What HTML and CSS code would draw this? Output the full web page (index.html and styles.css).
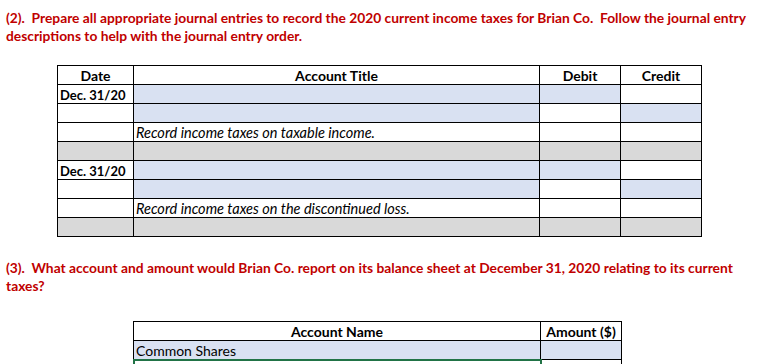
FILE: index.html
```html
<!DOCTYPE html>
<html>
<head>
<meta charset="utf-8">
<link rel="stylesheet" href="styles.css">
</head>
<body>
<p class="question q2">(2).&nbsp; Prepare all appropriate journal entries to record the 2020 current income taxes for Brian Co.&nbsp; Follow the journal entry<br>descriptions to help with the journal entry order.</p>

<table class="sheet journal">
  <colgroup>
    <col class="c-date"><col class="c-title"><col class="c-amt"><col class="c-amt">
  </colgroup>
  <tr class="head"><th>Date</th><th>Account Title</th><th>Debit</th><th>Credit</th></tr>
  <tr><td class="date">Dec. 31/20</td><td class="blue"></td><td class="blue"></td><td></td></tr>
  <tr><td></td><td class="blue"></td><td></td><td class="blue"></td></tr>
  <tr><td></td><td class="note">Record income taxes on taxable income.</td><td></td><td></td></tr>
  <tr class="gray"><td></td><td></td><td></td><td></td></tr>
  <tr><td class="date">Dec. 31/20</td><td class="blue"></td><td class="blue"></td><td></td></tr>
  <tr><td></td><td class="blue"></td><td></td><td class="blue"></td></tr>
  <tr><td></td><td class="note">Record income taxes on the discontinued loss.</td><td></td><td></td></tr>
  <tr class="gray"><td></td><td></td><td></td><td></td></tr>
</table>

<p class="question q3">(3).&nbsp; What account and amount would Brian Co. report on its balance sheet at December 31, 2020 relating to its current<br>taxes?</p>

<table class="sheet balance">
  <colgroup>
    <col class="c-name"><col class="c-amt">
  </colgroup>
  <tr class="head"><th>Account Name</th><th>Amount ($)</th></tr>
  <tr><td class="blue name">Common Shares</td><td class="blue"></td></tr>
  <tr class="sel-row"><td class="selected"></td><td></td></tr>
</table>
</body>
</html>
```

FILE: styles.css
```css
html, body {
  margin: 0;
  padding: 0;
  background: #fff;
}

body {
  font-family: Lato, "Open Sans", sans-serif;
  color: #000;
  padding-top: 9px;
}

.question {
  margin: 0;
  padding-left: 6px;
  color: #c00000;
  font-weight: 700;
  font-size: 13.8px;
  line-height: 18px;
  white-space: nowrap;
}

.q3 {
  margin-top: 22px;
}

.sheet {
  border-collapse: collapse;
  table-layout: fixed;
  font-size: 14px;
}

.sheet th,
.sheet td {
  border: 1px solid #000;
  height: 18px;
  padding: 0 2px;
  line-height: 16px;
  overflow: hidden;
  white-space: nowrap;
  vertical-align: bottom;
}

.sheet th {
  font-weight: 700;
  text-align: center;
}

.journal {
  margin: 20px 0 0 57px;
  width: 645px;
}

.c-date { width: 76px; }
.c-title { width: 406px; }
.c-amt { width: 81px; }

.date {
  font-weight: 700;
  font-size: 13px;
  padding-left: 1px;
}

.note {
  font-style: italic;
  font-size: 14.5px;
}

.blue { background: #d9e1f2; }
.gray td { background: #d9d9d9; }

.balance {
  margin: 26px 0 0 133px;
  width: 489px;
}

.c-name { width: 407px; }

.sheet td.selected {
  outline: 2px solid #217346;
  outline-offset: -1px;
}
```
